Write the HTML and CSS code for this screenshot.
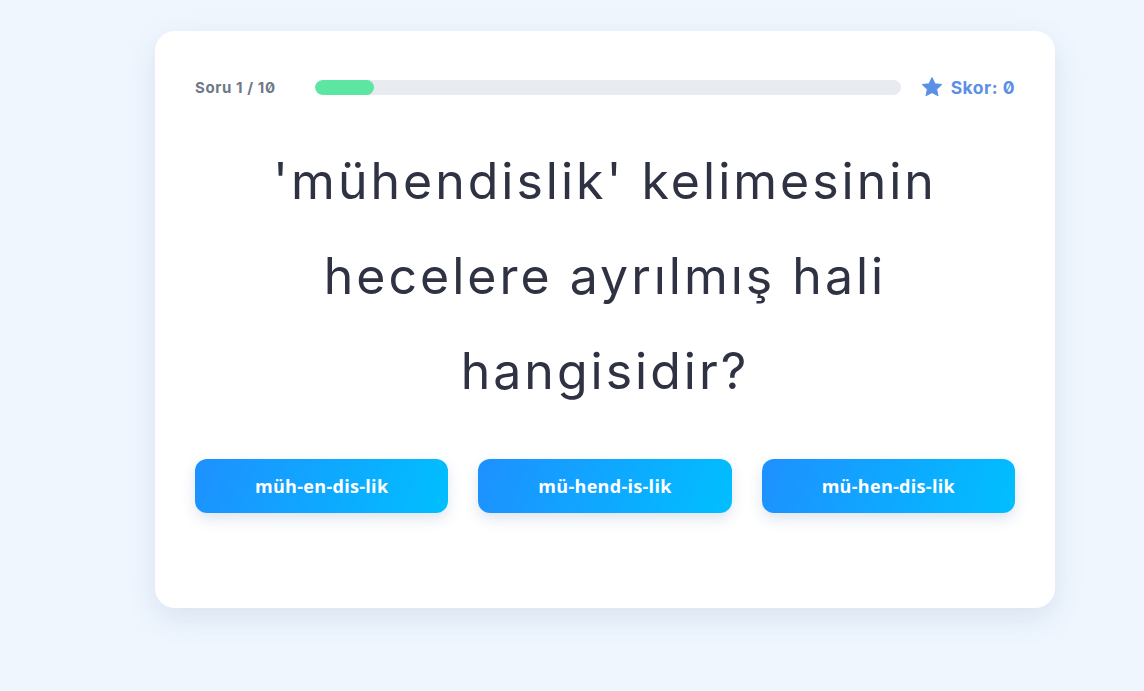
FILE: index.html
```html
<!DOCTYPE html>
<html lang="tr">
<head>
<meta charset="utf-8">
<link rel="stylesheet" href="styles.css">
</head>
<body>
<main class="page">
  <section class="card">
    <header class="top">
      <span class="count">Soru 1 / 10</span>
      <div class="track"><div class="fill" style="width:10%"></div></div>
      <span class="score">
        <svg class="star" viewBox="0 0 24 24" width="22" height="22"><path d="M12 1.8l3.1 6.6 7.2.9-5.3 5 1.4 7.1L12 17.9l-6.4 3.5 1.4-7.1-5.3-5 7.2-.9z" fill="#5b8fe8" stroke="#5b8fe8" stroke-width="1.2" stroke-linejoin="round"/></svg>
        Skor: 0
      </span>
    </header>
    <h1 class="question">'mühendislik' kelimesinin hecelere ayrılmış hali hangisidir?</h1>
    <div class="options">
      <button class="opt">müh-en-dis-lik</button>
      <button class="opt">mü-hend-is-lik</button>
      <button class="opt">mü-hen-dis-lik</button>
    </div>
  </section>
</main>
</body>
</html>
```
FILE: styles.css
```css
* { box-sizing: border-box; }
html, body { margin: 0; padding: 0; }
body {
  background: #eff6fe;
  font-family: Inter, "Noto Sans", sans-serif;
  width: 1144px;
  height: 691px;
  overflow: hidden;
}
.page {
  padding: 31px 0 0 155px;
}
.card {
  width: 900px;
  height: 577px;
  background: #fff;
  border-radius: 20px;
  box-shadow: 0 10px 30px rgba(60, 90, 140, 0.12);
  padding: 40px 40px;
}
.top {
  display: flex;
  align-items: center;
  height: 32px;
}
.count {
  font-size: 15px;
  font-weight: 700;
  color: #6e7888;
  letter-spacing: 0.6px;
  font-feature-settings: "zero" 1;
  width: 120px;
}
.track {
  flex: 1;
  height: 15px;
  background: #e8ebef;
  border-radius: 8px;
  overflow: hidden;
}
.fill {
  height: 100%;
  background: #5ce6a2;
  border-radius: 8px;
}
.score {
  display: flex;
  align-items: center;
  gap: 8px;
  margin-left: 20px;
  font-size: 17.5px;
  font-weight: 700;
  letter-spacing: 0.5px;
  color: #5b8fe8;
  font-feature-settings: "zero" 1;
}
.question {
  margin: 31px 0 40px;
  font-size: 50px;
  font-weight: 400;
  line-height: 95px;
  color: #2e3242;
  text-align: center;
  padding: 0 40px;
  letter-spacing: 3px;
}
.options {
  display: grid;
  grid-template-columns: repeat(3, 1fr);
  gap: 30px;
}
.opt {
  height: 54px;
  border: none;
  border-radius: 12px;
  background: linear-gradient(110deg, #1e90ff, #00bfff);
  color: #fff;
  font-family: "Open Sans", sans-serif;
  font-weight: 700;
  font-size: 18px;
  letter-spacing: 0.3px;
  box-shadow: 0 6px 14px rgba(40, 80, 140, 0.15);
}
```
